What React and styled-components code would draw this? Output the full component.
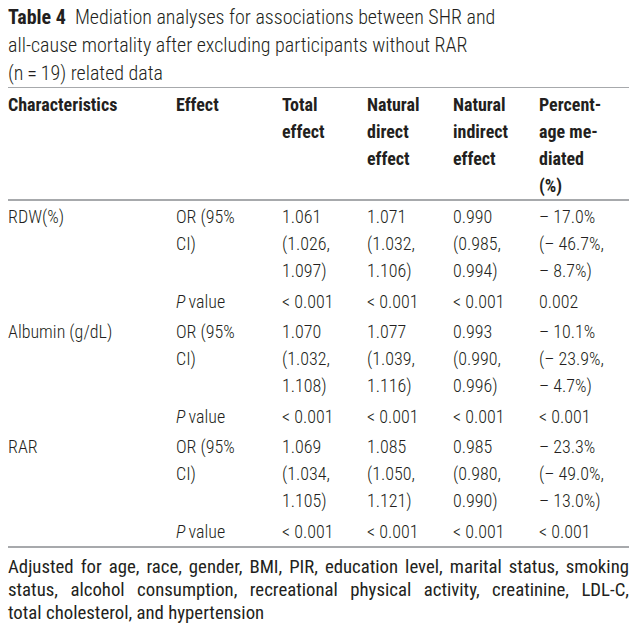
import React from "react";
import styled, { createGlobalStyle } from "styled-components";

const GlobalStyle = createGlobalStyle`
  html, body { background: #ffffff; }
  body {
    margin: 0;
    padding: 0 8px;
    font-family: "Roboto Condensed", "Roboto", "Liberation Sans", sans-serif;
    font-stretch: condensed;
    color: #231f20;
  }
`;

const Wrapper = styled.div`
  width: 621px;
`;

const Caption = styled.div`
  padding-top: 3px;
  font-size: 20px;
  line-height: 28px;
  font-weight: 300;
`;

const CaptionLabel = styled.span`
  font-weight: 700;
  margin-right: 9px;
`;

const Grid = styled.div`
  display: grid;
  grid-template-columns: 168px 106px 85px 86px 86px 90px;
  border-top: 1px solid #a7a9ac;
  border-bottom: 2px solid #a7a9ac;
`;

const HeadCell = styled.div`
  padding-top: 3px;
  font-size: 18px;
  line-height: 27px;
  font-weight: 700;
  border-bottom: 2px solid #a7a9ac;
`;

const Cell = styled.div`
  padding-top: ${(p) => (p.$pv ? 3 : 2)}px;
  padding-bottom: 1px;
  font-size: 18px;
  line-height: 27px;
  font-weight: 300;
  white-space: nowrap;
`;

const Line = styled.div``;

const Ital = styled.i`
  font-style: italic;
  margin-right: 3px;
`;

const Footnote = styled.div`
  padding-top: 8px;
  font-size: 18.8px;
  line-height: 23px;
  font-weight: 400;
`;

const FootLine = styled.div`
  white-space: nowrap;
  text-align: ${(p) => (p.$justify ? "justify" : "left")};
  text-align-last: ${(p) => (p.$justify ? "justify" : "left")};
`;

const headers = [
  ["Characteristics"],
  ["Effect"],
  ["Total", "effect"],
  ["Natural", "direct", "effect"],
  ["Natural", "indirect", "effect"],
  ["Percent-", "age me-", "diated", "(%)"],
];

const groups = [
  {
    name: "RDW(%)",
    or: [
      ["1.061", "(1.026,", "1.097)"],
      ["1.071", "(1.032,", "1.106)"],
      ["0.990", "(0.985,", "0.994)"],
      ["\u2013 17.0%", "(\u2013 46.7%,", "\u2013 8.7%)"],
    ],
    p: ["< 0.001", "< 0.001", "< 0.001", "0.002"],
  },
  {
    name: "Albumin (g/dL)",
    or: [
      ["1.070", "(1.032,", "1.108)"],
      ["1.077", "(1.039,", "1.116)"],
      ["0.993", "(0.990,", "0.996)"],
      ["\u2013 10.1%", "(\u2013 23.9%,", "\u2013 4.7%)"],
    ],
    p: ["< 0.001", "< 0.001", "< 0.001", "< 0.001"],
  },
  {
    name: "RAR",
    or: [
      ["1.069", "(1.034,", "1.105)"],
      ["1.085", "(1.050,", "1.121)"],
      ["0.985", "(0.980,", "0.990)"],
      ["\u2013 23.3%", "(\u2013 49.0%,", "\u2013 13.0%)"],
    ],
    p: ["< 0.001", "< 0.001", "< 0.001", "< 0.001"],
  },
];

const footLines = [
  "Adjusted for age, race, gender, BMI, PIR, education level, marital status, smoking",
  "status, alcohol consumption, recreational physical activity, creatinine, LDL-C,",
  "total cholesterol, and hypertension",
];

function Lines({ items }) {
  return items.map((t, i) => <Line key={i}>{t}</Line>);
}

export default function App() {
  return (
    <>
      <GlobalStyle />
      <Wrapper>
        <Caption>
          <CaptionLabel>Table 4</CaptionLabel>
          Mediation analyses for associations between SHR and
          <br />
          all-cause mortality after excluding participants without RAR
          <br />
          (n{"\u2009=\u2009"}19) related data
        </Caption>
        <Grid>
          {headers.map((h, i) => (
            <HeadCell key={i}>
              <Lines items={h} />
            </HeadCell>
          ))}
          {groups.map((g) => (
            <React.Fragment key={g.name}>
              <Cell>{g.name}</Cell>
              <Cell>
                <Lines items={["OR (95%", "CI)"]} />
              </Cell>
              {g.or.map((c, i) => (
                <Cell key={i}>
                  <Lines items={c} />
                </Cell>
              ))}
              <Cell $pv />
              <Cell $pv>
                <Ital>P</Ital>value
              </Cell>
              {g.p.map((v, i) => (
                <Cell $pv key={i}>
                  {v}
                </Cell>
              ))}
            </React.Fragment>
          ))}
        </Grid>
        <Footnote>
          {footLines.map((t, i) => (
            <FootLine key={i} $justify={i < footLines.length - 1}>
              {t}
            </FootLine>
          ))}
        </Footnote>
      </Wrapper>
    </>
  );
}
